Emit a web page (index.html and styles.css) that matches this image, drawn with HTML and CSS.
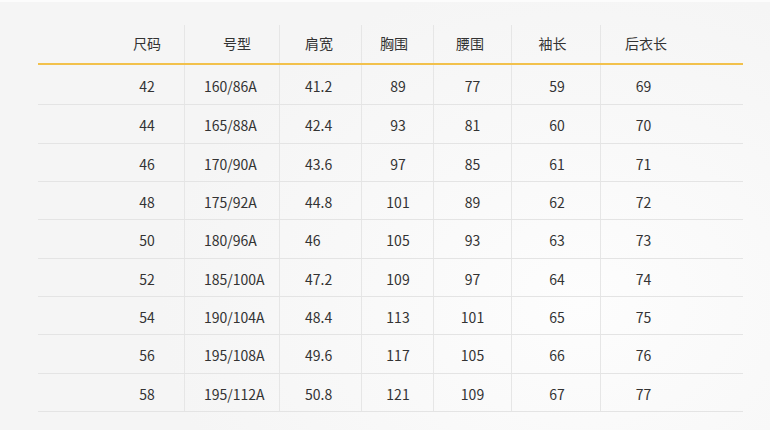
FILE: index.html
```html
<!DOCTYPE html>
<html lang="zh">
<head>
<meta charset="utf-8">
<link rel="stylesheet" href="styles.css">
</head>
<body>
<div class="card">
  <div class="size-table">
    <div class="row head">
      <div class="c c1">尺码</div><div class="c c2">号型</div><div class="c c3">肩宽</div><div class="c c4">胸围</div><div class="c c5">腰围</div><div class="c c6">袖长</div><div class="c c7">后衣长</div>
    </div>
    <div class="row first"><div class="c c1">42</div><div class="c c2">160/86A</div><div class="c c3">41.2</div><div class="c c4">89</div><div class="c c5">77</div><div class="c c6">59</div><div class="c c7">69</div></div>
    <div class="row"><div class="c c1">44</div><div class="c c2">165/88A</div><div class="c c3">42.4</div><div class="c c4">93</div><div class="c c5">81</div><div class="c c6">60</div><div class="c c7">70</div></div>
    <div class="row"><div class="c c1">46</div><div class="c c2">170/90A</div><div class="c c3">43.6</div><div class="c c4">97</div><div class="c c5">85</div><div class="c c6">61</div><div class="c c7">71</div></div>
    <div class="row"><div class="c c1">48</div><div class="c c2">175/92A</div><div class="c c3">44.8</div><div class="c c4">101</div><div class="c c5">89</div><div class="c c6">62</div><div class="c c7">72</div></div>
    <div class="row"><div class="c c1">50</div><div class="c c2">180/96A</div><div class="c c3">46</div><div class="c c4">105</div><div class="c c5">93</div><div class="c c6">63</div><div class="c c7">73</div></div>
    <div class="row"><div class="c c1">52</div><div class="c c2">185/100A</div><div class="c c3">47.2</div><div class="c c4">109</div><div class="c c5">97</div><div class="c c6">64</div><div class="c c7">74</div></div>
    <div class="row"><div class="c c1">54</div><div class="c c2">190/104A</div><div class="c c3">48.4</div><div class="c c4">113</div><div class="c c5">101</div><div class="c c6">65</div><div class="c c7">75</div></div>
    <div class="row"><div class="c c1">56</div><div class="c c2">195/108A</div><div class="c c3">49.6</div><div class="c c4">117</div><div class="c c5">105</div><div class="c c6">66</div><div class="c c7">76</div></div>
    <div class="row"><div class="c c1">58</div><div class="c c2">195/112A</div><div class="c c3">50.8</div><div class="c c4">121</div><div class="c c5">109</div><div class="c c6">67</div><div class="c c7">77</div></div>
  </div>
</div>
</body>
</html>
```
FILE: styles.css
```css
html, body {
  margin: 0;
  padding: 0;
  background: #ffffff;
}
body {
  width: 770px;
  height: 433px;
  overflow: hidden;
  font-family: "Noto Sans CJK SC", "Noto Sans", sans-serif;
  font-size: 14px;
  color: #333333;
}
.card {
  height: 430px;
  box-sizing: border-box;
  padding: 23px 0 0 38px;
  border-top: 2px solid #fcfcfc;
  background: radial-gradient(ellipse 420px 330px at 580px 300px, #fdfdfd 0%, #f8f8f8 60%, #f5f5f5 100%);
}
.size-table {
  width: 705px;
  display: flex;
  flex-direction: column;
}
.row {
  display: grid;
  grid-template-columns: 147px 95px 82px 72px 78px 89px 142px;
  height: 38.34px;
  box-sizing: border-box;
  border-bottom: 1px solid #e4e4e4;
}
.row.head {
  height: 40px;
  border-bottom: 2px solid #f2c14c;
}
.row.first {
  height: 40.3px;
}
.c {
  display: flex;
  align-items: center;
  justify-content: center;
  line-height: 1;
  padding-top: 3px;
  border-right: 1px solid #e6e6e6;
  box-sizing: border-box;
  white-space: nowrap;
}
.head .c {
  padding-top: 0;
  padding-bottom: 2px;
}
.c7 { border-right: none; }
.c1 { padding-left: 72px; }
.c2 { justify-content: flex-start; padding-left: 19px; }
.c3 { justify-content: flex-start; padding-left: 25px; }
.c4 { padding-left: 1px; }
.c6 { padding-left: 2px; }
.c7 { padding-right: 57px; }
.head .c2 { justify-content: center; padding-left: 10px; }
.head .c4 { justify-content: flex-start; padding-left: 18px; }
.head .c5 { padding-right: 5px; }
.head .c6 { padding-left: 0; padding-right: 7px; }
.head .c7 { padding-right: 52px; }
```
